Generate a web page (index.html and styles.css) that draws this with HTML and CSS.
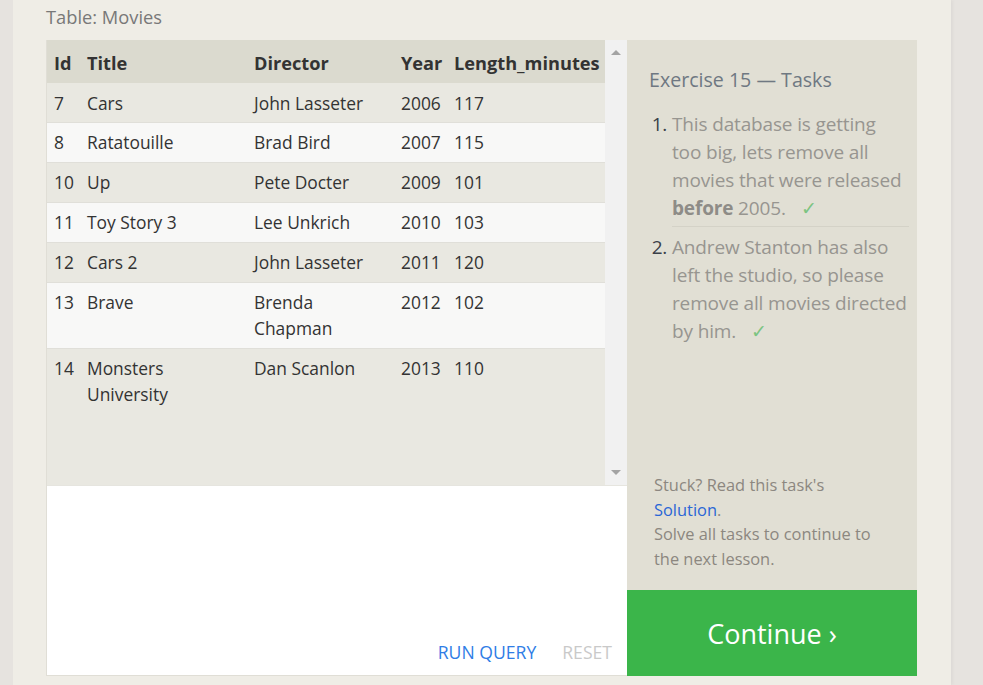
FILE: index.html
```html
<!DOCTYPE html>
<html>
<head>
<meta charset="utf-8">
<link rel="stylesheet" href="styles.css">
</head>
<body>
<div class="page">
  <div class="caption">Table: Movies</div>
  <div class="exercise">
    <div class="left">
      <div class="scroll">
        <div class="table-wrap">
          <table class="movies">
            <colgroup>
              <col class="c-id"><col class="c-title"><col class="c-dir"><col class="c-year"><col class="c-len">
            </colgroup>
            <thead>
              <tr><th>Id</th><th>Title</th><th>Director</th><th>Year</th><th>Length_minutes</th></tr>
            </thead>
            <tbody>
              <tr><td>7</td><td>Cars</td><td>John Lasseter</td><td>2006</td><td>117</td></tr>
              <tr><td>8</td><td>Ratatouille</td><td>Brad Bird</td><td>2007</td><td>115</td></tr>
              <tr><td>10</td><td>Up</td><td>Pete Docter</td><td>2009</td><td>101</td></tr>
              <tr><td>11</td><td>Toy Story 3</td><td>Lee Unkrich</td><td>2010</td><td>103</td></tr>
              <tr><td>12</td><td>Cars 2</td><td>John Lasseter</td><td>2011</td><td>120</td></tr>
              <tr><td>13</td><td>Brave</td><td>Brenda Chapman</td><td>2012</td><td>102</td></tr>
              <tr><td>14</td><td>Monsters University</td><td>Dan Scanlon</td><td>2013</td><td>110</td></tr>
            </tbody>
          </table>
        </div>
        <div class="scrollbar">
          <span class="arrow up"></span>
          <span class="arrow down"></span>
        </div>
      </div>
      <div class="editor">
        <div class="actions">
          <span class="run">RUN QUERY</span>
          <span class="reset">RESET</span>
        </div>
      </div>
    </div>
    <div class="right">
      <div class="tasks">
        <h3 class="tasks-title">Exercise 15 — Tasks</h3>
        <ol class="task-list">
          <li>This database is getting too big, lets remove all movies that were released <b>before</b> 2005. <span class="check">✓</span></li>
          <li>Andrew Stanton has also left the studio, so please remove all movies directed by him. <span class="check">✓</span></li>
        </ol>
        <div class="help">
          Stuck? Read this task's <a class="solution">Solution</a>.<br>
          Solve all tasks to continue to the next lesson.
        </div>
      </div>
      <div class="continue">Continue ›</div>
    </div>
  </div>
</div>
</body>
</html>
```

FILE: styles.css
```css
html, body {
  margin: 0;
  padding: 0;
}
body {
  background: #e6e3df;
  font-family: "Open Sans", "Noto Sans", sans-serif;
  color: #333;
  height: 685px;
  overflow: hidden;
}
.page {
  margin-left: 13px;
  width: 938px;
  height: 685px;
  box-sizing: border-box;
  padding: 0 34px 0 33px;
  background: #efede6;
  box-shadow: 2px 0 3px rgba(0,0,0,0.04);
}
.caption {
  height: 40px;
  line-height: 34px;
  font-size: 18.3px;
  color: #787878;
}
.exercise {
  display: flex;
  height: 636px;
}
.left {
  width: 581px;
  box-sizing: border-box;
  border: 1px solid #e0ded6;
  border-top: none;
  border-right: none;
  background: #fff;
  display: flex;
  flex-direction: column;
}
.scroll {
  height: 445px;
  display: flex;
  background: #e9e8e1;
}
.table-wrap {
  width: 558px;
}
.movies {
  width: 558px;
  table-layout: fixed;
  border-collapse: collapse;
  font-size: 17.4px;
  line-height: 26px;
}
.c-id { width: 33px; }
.c-title { width: 167px; }
.c-dir { width: 147px; }
.c-year { width: 53px; }
.c-len { width: 158px; }
.movies th {
  background: #dbdacf;
  text-align: left;
  font-weight: 700;
  font-size: 18.2px;
  padding: 10px 0 7px 7px;
  color: #333;
  white-space: nowrap;
}
.movies td {
  padding: 6px 7px 7px;
  vertical-align: top;
  color: #333;
}
.movies tbody tr {
  border-top: 1px solid #e0dfd9;
}
.movies tbody tr:first-child { border-top: none; }
.movies tbody tr:first-child td { padding-top: 7px; padding-bottom: 6px; }
.movies tbody tr:nth-child(odd) { background: #e9e8e1; }
.movies tbody tr:nth-child(even) { background: #f8f8f7; }
.scrollbar {
  width: 22px;
  background: #f1f1f1;
  display: flex;
  flex-direction: column;
  justify-content: space-between;
  align-items: center;
  padding: 10px 0 10px;
  box-sizing: border-box;
}
.arrow {
  width: 0;
  height: 0;
  border-left: 5px solid transparent;
  border-right: 5px solid transparent;
}
.arrow.up { border-bottom: 5px solid #a3a3a3; }
.arrow.down { border-top: 5px solid #a3a3a3; }
.editor {
  flex: 1;
  display: flex;
  flex-direction: column;
  justify-content: flex-end;
  border-top: 1px solid #e6e5df;
}
.actions {
  display: flex;
  justify-content: flex-end;
  gap: 26px;
  padding: 0 15px 11px 0;
  font-size: 17.6px;
  line-height: 24px;
}
.run { color: #2f7de6; }
.reset { color: #c9c9c9; }
.right {
  width: 290px;
  display: flex;
  flex-direction: column;
}
.tasks {
  flex: 1;
  background: #e1dfd4;
  padding: 26px 8px 0 22px;
  display: flex;
  flex-direction: column;
}
.tasks-title {
  margin: 0;
  font-weight: 400;
  font-size: 19.6px;
  line-height: 28px;
  color: #6f7882;
}
.task-list {
  margin: 16px 0 0 0;
  padding: 0 0 0 23px;
  font-size: 19px;
  letter-spacing: -0.15px;
  line-height: 28px;
  color: #979590;
}
.task-list li {
  padding-bottom: 4px;
}
.task-list li::marker { color: #3a4048; }
.task-list li + li {
  border-top: 1px solid #d4d2c7;
  padding-top: 6px;
}
.task-list b { font-weight: 700; color: #8e8c87; }
.check {
  color: #7cc481;
  margin-left: 10px;
}
.help {
  margin-top: auto;
  width: 232px;
  padding: 0 0 19px 5px;
  font-size: 16.4px;
  line-height: 24.5px;
  color: #8c8780;
}
.solution { color: #2a66d6; }
.continue {
  height: 86px;
  background: #3bb54a;
  color: #fff;
  font-size: 27px;
  display: flex;
  align-items: center;
  justify-content: center;
}
```
